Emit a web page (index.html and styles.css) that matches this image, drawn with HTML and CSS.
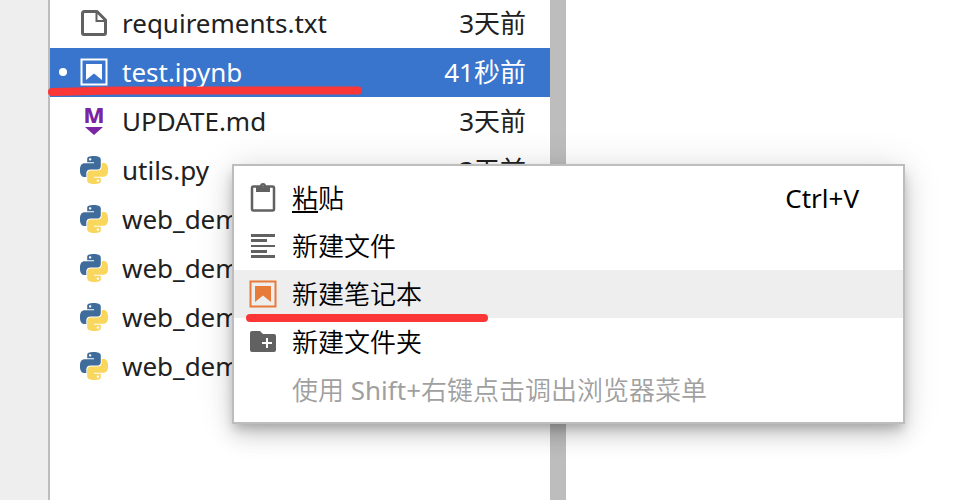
FILE: index.html
```html
<!DOCTYPE html>
<html lang="zh-CN">
<head>
<meta charset="utf-8">
<title>文件</title>
<link rel="stylesheet" href="styles.css">
</head>
<body>
<svg class="symbols" aria-hidden="true">
  <symbol id="python" viewBox="0 0 24 24">
    <path fill="#3f6c9b" d="M14.25.18l.9.2.73.26.59.3.45.32.34.34.25.34.16.33.1.3.04.26.02.2-.01.13V8.5l-.05.63-.13.55-.21.46-.26.38-.3.31-.33.25-.35.19-.35.14-.33.1-.3.07-.26.04-.21.02H8.77l-.69.05-.59.14-.5.22-.41.27-.33.32-.27.35-.2.36-.15.37-.1.35-.07.32-.04.27-.02.21v3.06H3.17l-.21-.03-.28-.07-.32-.12-.35-.18-.36-.26-.36-.36-.35-.46-.32-.59-.28-.73-.21-.88-.14-1.05-.05-1.23.06-1.22.16-1.04.24-.87.32-.71.36-.57.4-.44.42-.33.42-.24.4-.16.36-.1.32-.05.24-.01h.16l.06.01h8.16v-.83H6.18l-.01-2.75-.02-.37.05-.34.11-.31.17-.28.25-.26.31-.23.38-.2.44-.18.51-.15.58-.12.64-.1.71-.06.77-.04.84-.02 1.27.05zm-6.3 1.98l-.23.33-.08.41.08.41.23.34.33.22.41.09.41-.09.33-.22.23-.34.08-.41-.08-.41-.23-.33-.33-.22-.41-.09-.41.09z"/>
    <path fill="#f9d65c" transform="rotate(180 12 12)" d="M14.25.18l.9.2.73.26.59.3.45.32.34.34.25.34.16.33.1.3.04.26.02.2-.01.13V8.5l-.05.63-.13.55-.21.46-.26.38-.3.31-.33.25-.35.19-.35.14-.33.1-.3.07-.26.04-.21.02H8.77l-.69.05-.59.14-.5.22-.41.27-.33.32-.27.35-.2.36-.15.37-.1.35-.07.32-.04.27-.02.21v3.06H3.17l-.21-.03-.28-.07-.32-.12-.35-.18-.36-.26-.36-.36-.35-.46-.32-.59-.28-.73-.21-.88-.14-1.05-.05-1.23.06-1.22.16-1.04.24-.87.32-.71.36-.57.4-.44.42-.33.42-.24.4-.16.36-.1.32-.05.24-.01h.16l.06.01h8.16v-.83H6.18l-.01-2.75-.02-.37.05-.34.11-.31.17-.28.25-.26.31-.23.38-.2.44-.18.51-.15.58-.12.64-.1.71-.06.77-.04.84-.02 1.27.05zm-6.3 1.98l-.23.33-.08.41.08.41.23.34.33.22.41.09.41-.09.33-.22.23-.34.08-.41-.08-.41-.23-.33-.33-.22-.41-.09-.41.09z"/>
  </symbol>
  <symbol id="notebook" viewBox="0 0 28 28">
    <path fill="none" stroke="currentColor" stroke-width="2" d="M1.500 1.500h25v25h-25z"/>
    <path fill="currentColor" d="M6 6h16v16l-8-6.500-8 6.500z"/>
  </symbol>
</svg>
<div class="app">
  <div class="sidebar"></div>
  <ul class="files">
    <li class="file">
      <span class="dot"></span>
      <svg class="icon gray" viewBox="0 0 28 28"><path fill="none" stroke="currentColor" stroke-width="3" stroke-linejoin="round" d="M4.500 2.500H17l8.500 8.500V24q0 1.500-1.500 1.500H4q-1.500 0-1.500-1.500V4.500Q2.500 2.500 4.500 2.500z"/><path fill="none" stroke="currentColor" stroke-width="2" d="M16.500 3v9H25"/></svg>
      <span class="name">requirements.txt</span><time>3天前</time>
    </li>
    <li class="file selected">
      <span class="dot on"></span>
      <svg class="icon"><use href="#notebook"/></svg>
      <span class="name">test.ipynb</span><time>41秒前</time>
      <svg class="stroke" viewBox="0 0 314 10" preserveAspectRatio="none"><path fill="none" stroke="#fb3637" stroke-width="8" stroke-linecap="round" stroke-linejoin="round" d="M4 6Q60 4 90 4.500H310"/></svg>
    </li>
    <li class="file">
      <span class="dot"></span>
      <svg class="icon purple" viewBox="0 0 28 28"><text class="mark" x="14" y="16" text-anchor="middle">M</text><path fill="currentColor" d="M5 20h18l-9 8z"/></svg>
      <span class="name">UPDATE.md</span><time>3天前</time>
    </li>
    <li class="file"><span class="dot"></span><svg class="icon"><use href="#python"/></svg><span class="name">utils.py</span><time>3天前</time></li>
    <li class="file"><span class="dot"></span><svg class="icon"><use href="#python"/></svg><span class="name">web_demo</span></li>
    <li class="file"><span class="dot"></span><svg class="icon"><use href="#python"/></svg><span class="name">web_demo</span></li>
    <li class="file"><span class="dot"></span><svg class="icon"><use href="#python"/></svg><span class="name">web_demo</span></li>
    <li class="file"><span class="dot"></span><svg class="icon"><use href="#python"/></svg><span class="name">web_demo</span></li>
  </ul>
  <div class="splitter"></div>
  <main class="content"></main>
</div>
<div class="menu" role="menu">
  <button class="item" role="menuitem">
    <svg class="icon gray" viewBox="0 0 28 28"><path fill="none" stroke="currentColor" stroke-width="2.500" d="M4.500 2.500h19q1.500 0 1.500 1.500v21q0 1.500-1.500 1.500h-19Q3 26.500 3 25V4q0-1.500 1.500-1.500z"/><path fill="currentColor" fill-rule="evenodd" d="M7 2h4a3 3 0 0 1 6 0h4v6H7zM14 1a1 1 0 1 0 0 2.500 1 1 0 0 0 0-2.500z"/></svg>
    <span class="label"><u>粘</u>贴</span><kbd>Ctrl+V</kbd>
  </button>
  <button class="item" role="menuitem">
    <svg class="icon gray" viewBox="0 0 28 28"><path fill="currentColor" d="M2 2h24v3H2zM2 7h16v3H2zM2 13h24v2H2zM2 18h16v3H2zM2 23h24v3H2z"/></svg>
    <span class="label">新建文件</span>
  </button>
  <button class="item active" role="menuitem">
    <svg class="icon orange"><use href="#notebook"/></svg>
    <span class="label">新建笔记本</span>
    <span class="underline"></span>
  </button>
  <button class="item" role="menuitem">
    <svg class="icon gray" viewBox="0 0 28 28"><path fill="currentColor" fill-rule="evenodd" d="M3 3h8l3 3h11q2 0 2 2v14q0 2-2 2H3q-2 0-2-2V5q0-2 2-2zM17 10v4h-4v2h4v4h2v-4h4v-2h-4v-4z"/></svg>
    <span class="label">新建文件夹</span>
  </button>
  <button class="item" role="menuitem" disabled>
    <span class="icon"></span>
    <span class="label">使用 <kbd>Shift+</kbd>右键点击调出浏览器菜单</span>
  </button>
</div>
</body>
</html>
```
FILE: styles.css
```css
* { box-sizing: border-box; }
body {
  margin: 0;
  overflow: hidden;
  background: #fff;
  color: #212121;
  font: 26px/48px "Noto Sans", "Noto Sans CJK SC", sans-serif;
}
.symbols { position: absolute; width: 0; height: 0; }
.app { display: flex; height: 100vh; overflow: hidden; }
.sidebar { flex: 0 0 50px; background: #eee; border-right: 2px solid #bdbdbd; }
.files { flex: 0 0 500px; margin: -1px 0 0; padding: 0; list-style: none; }
.splitter { flex: 0 0 16px; background: #bdbdbd; }
.content { flex: 1; }
.file {
  position: relative;
  display: flex;
  align-items: center;
  height: 49px;
  padding: 0 24px 2px 9px;
}
.selected { background: #3974cd; color: #fff; }
.dot { width: 8px; height: 8px; margin-right: 13px; border-radius: 50%; }
.on { background: #fff; }
.icon { flex: none; width: 28px; height: 28px; margin-right: 14px; overflow: visible; }
.name { flex: 1; }
.gray { color: #616161; }
.purple { color: #7b24a3; }
.orange { color: #e67b3a; }
.mark { font: 800 22px "Noto Sans", sans-serif; fill: currentColor; }
.stroke { position: absolute; left: -2px; bottom: 1px; width: 314px; height: 10px; }
.menu {
  position: absolute;
  left: 232px;
  top: 164px;
  width: 673px;
  padding: 8px 0;
  background: #fff;
  border: 2px solid #bdbdbd;
  box-shadow: 0 6px 10px -2px rgba(0, 0, 0, 0.2), 0 12px 20px rgba(0, 0, 0, 0.14), 0 2px 36px rgba(0, 0, 0, 0.12);
}
.item {
  position: relative;
  display: flex;
  align-items: center;
  width: 100%;
  height: 48px;
  padding: 0 44px 0 15px;
  border: 0;
  background: none;
  color: #000;
  font: inherit;
  font-weight: 350;
  text-align: left;
}
.item .icon { margin-right: 15px; }
.item:disabled { color: #a0a0a0; }
.active { background: #eee; }
.label { flex: 1; }
kbd { font: inherit; font-weight: 400; }
u { text-underline-offset: 3px; text-decoration-thickness: 2px; }
.underline {
  position: absolute;
  left: 12px;
  bottom: -4px;
  width: 242px;
  height: 8px;
  border-radius: 4px;
  background: #fb3637;
  z-index: 1;
}
```
